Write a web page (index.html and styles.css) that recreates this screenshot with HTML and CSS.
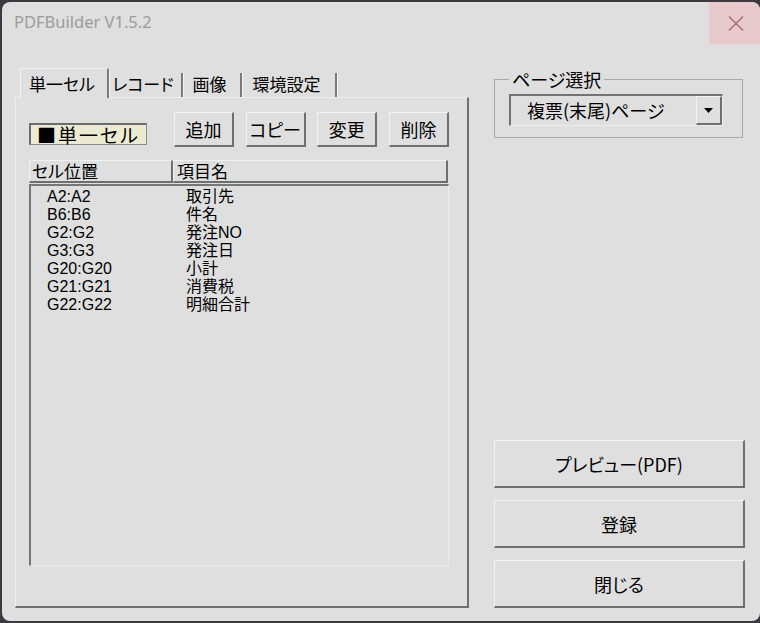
FILE: index.html
```html
<!DOCTYPE html>
<html lang="ja">
<head>
<meta charset="utf-8">
<title>PDFBuilder</title>
<link rel="stylesheet" href="styles.css">
</head>
<body>
<div class="window">
  <div class="titlebar">
    <div class="title">PDFBuilder V1.5.2</div>
    <div class="close">
      <svg width="16" height="15" viewBox="0 0 16 15"><path d="M1 0.5L15 14.5M15 0.5L1 14.5" stroke="#9d6466" stroke-width="1.1" fill="none"/></svg>
    </div>
  </div>
  <div class="content">
    <div class="left">
      <div class="tabs">
        <div class="tab tab-active t1">単一セル</div>
        <div class="tab t2">レコード</div>
        <div class="tab t3">画像</div>
        <div class="tab t4">環境設定</div>
      </div>
      <div class="panel">
        <div class="toolbar">
          <div class="mode-label">■単一セル</div>
          <div class="btns">
            <button class="btn">追加</button>
            <button class="btn">コピー</button>
            <button class="btn">変更</button>
            <button class="btn">削除</button>
          </div>
        </div>
        <div class="list-header">
          <div class="hcell h1">セル位置</div>
          <div class="hcell h2">項目名</div>
        </div>
        <div class="listbox">
          <div class="row"><span class="c1">A2:A2</span><span class="c2">取引先</span></div>
          <div class="row"><span class="c1">B6:B6</span><span class="c2">件名</span></div>
          <div class="row"><span class="c1">G2:G2</span><span class="c2">発注NO</span></div>
          <div class="row"><span class="c1">G3:G3</span><span class="c2">発注日</span></div>
          <div class="row"><span class="c1">G20:G20</span><span class="c2">小計</span></div>
          <div class="row"><span class="c1">G21:G21</span><span class="c2">消費税</span></div>
          <div class="row"><span class="c1">G22:G22</span><span class="c2">明細合計</span></div>
        </div>
      </div>
    </div>
    <div class="right">
      <fieldset class="group">
        <legend class="group-title">ページ選択</legend>
        <div class="combo">
          <span class="combo-text">複票(末尾)ページ</span>
          <span class="combo-btn">
            <svg width="9" height="5" viewBox="0 0 9 5"><path d="M0 0H9L4.5 5Z" fill="#000"/></svg>
          </span>
        </div>
      </fieldset>
      <div class="actions">
        <button class="big-btn">プレビュー(PDF)</button>
        <button class="big-btn">登録</button>
        <button class="big-btn">閉じる</button>
      </div>
    </div>
  </div>
</div>
</body>
</html>
```

FILE: styles.css
```css
* { box-sizing: border-box; }
html, body { margin: 0; padding: 0; }
body {
  background: #3b3b3d;
  width: 760px;
  height: 623px;
  overflow: hidden;
  font-family: "Noto Sans CJK JP", "Noto Sans", sans-serif;
  font-feature-settings: "palt";
  color: #000;
}
.window {
  margin: 2px 0 0 2px;
  width: 758px;
  height: 619px;
  background: #dfdfdf;
  border-radius: 8px;
  display: flex;
  flex-direction: column;
  overflow: hidden;
}
.titlebar {
  height: 42px;
  display: flex;
  justify-content: space-between;
  align-items: stretch;
  flex: none;
}
.title {
  font-family: "Noto Sans", "Open Sans", sans-serif;
  font-feature-settings: normal;
  font-size: 16.5px;
  color: #9b9b9b;
  padding-left: 12px;
  line-height: 40px;
}
.close {
  width: 51px;
  background: #e7c9cb;
  display: flex;
  align-items: center;
  justify-content: center;
  padding-left: 2px;
  border-top-right-radius: 8px;
}
.content {
  flex: 1;
  display: flex;
  padding: 24px 0 13px 13px;
}
.left {
  width: 454px;
  display: flex;
  flex-direction: column;
}
.tabs {
  display: flex;
  align-items: flex-end;
  height: 29px;
  padding-left: 5px;
  position: relative;
  z-index: 1;
}
.tab {
  height: 24px;
  font-size: 17px;
  line-height: 22px;
  text-align: center;
  padding-right: 4px;
  border-right: 2px solid #7a7a7a;
  box-shadow: 1px 0 0 #f4f4f4;
  white-space: nowrap;
}
.tab-active {
  height: 30px;
  line-height: 30px;
  margin-bottom: -1px;
  background: #dfdfdf;
  border-left: 1px solid #f2f2f2;
  border-top: 1px solid #f2f2f2;
}
.t1 { width: 89px; }
.t2 { width: 74px; }
.t3 { width: 59px; }
.t4 { width: 95px; }
.panel {
  flex: 1;
  border-top: 1px solid #eeeeee;
  border-left: 1px solid #eeeeee;
  border-right: 2px solid #6f6f6f;
  border-bottom: 2px solid #6f6f6f;
  padding: 14px 0 0 13px;
}
.toolbar {
  display: flex;
  align-items: flex-end;
}
.mode-label {
  width: 118px;
  height: 22px;
  margin-bottom: 2px;
  background: #ecebd2;
  border-top: 2px solid #6c6c6c;
  border-left: 2px solid #6c6c6c;
  border-right: 1px solid #8a8a8a;
  border-bottom: 1px solid #8a8a8a;
  font-size: 19px;
  line-height: 19px;
  letter-spacing: 2px;
  padding-left: 6px;
  white-space: nowrap;
}
.btns {
  display: flex;
  gap: 11.66px;
  margin-left: 27px;
}
.btn, .big-btn {
  font-family: inherit;
  font-feature-settings: "palt";
  color: #000;
  background: #dfdfdf;
  border-top: 1px solid #f3f3f3;
  border-left: 1px solid #f3f3f3;
  border-right: 2px solid #6f6f6f;
  border-bottom: 2px solid #6f6f6f;
  border-radius: 0;
  padding: 0;
  margin: 0;
}
.btn {
  width: 60px;
  height: 35px;
  font-size: 18px;
  line-height: 30px;
}
.list-header {
  margin-top: 13px;
  width: 419px;
  height: 23px;
  display: flex;
}
.hcell {
  border-top: 1px solid #f0f0f0;
  border-left: 1px solid #f0f0f0;
  border-right: 2px solid #6f6f6f;
  border-bottom: 2px solid #6f6f6f;
  font-size: 17px;
  line-height: 20px;
  white-space: nowrap;
}
.h1 { width: 144px; padding-left: 2px; }
.h2 { flex: 1; padding-left: 3px; }
.listbox {
  margin-top: 1px;
  width: 420px;
  height: 382px;
  border-top: 2px solid #767676;
  border-left: 2px solid #767676;
  border-right: 1px solid #ebebeb;
  border-bottom: 1px solid #ebebeb;
  padding: 2px 0 0 16px;
}
.row {
  display: flex;
  height: 18px;
  font-family: "Liberation Sans", "Noto Sans CJK JP", sans-serif;
  font-size: 16px;
  line-height: 18px;
}
.c1 { width: 139px; }
.right {
  width: 251px;
  margin-left: 25px;
  display: flex;
  flex-direction: column;
}
.group {
  margin: 0;
  width: 249px;
  min-width: 0;
  border: 1px solid #a9a9a9;
  padding: 4px 0 11px 14px;
}
.group-title {
  padding: 0 3px;
  font-size: 18px;
  line-height: 22px;
}
.combo {
  width: 214px;
  height: 32px;
  display: flex;
  align-items: stretch;
  border-top: 2px solid #737373;
  border-left: 2px solid #737373;
  border-right: 1px solid #efefef;
  border-bottom: 1px solid #efefef;
}
.combo-text {
  font-size: 18px;
  line-height: 28px;
  padding-left: 16px;
  white-space: nowrap;
}
.combo-btn {
  margin-left: auto;
  width: 26px;
  border-top: 1px solid #f3f3f3;
  border-left: 1px solid #f3f3f3;
  border-right: 2px solid #6f6f6f;
  border-bottom: 2px solid #6f6f6f;
  display: flex;
  align-items: center;
  justify-content: center;
  padding-top: 1px;
}
.actions {
  margin-top: auto;
  display: flex;
  flex-direction: column;
  gap: 12px;
}
.big-btn {
  width: 251px;
  height: 48px;
  font-size: 18px;
  line-height: 40px;
}
```
